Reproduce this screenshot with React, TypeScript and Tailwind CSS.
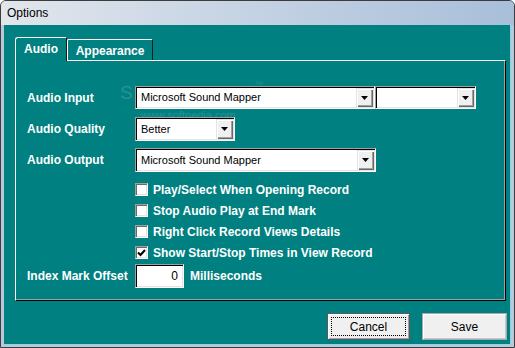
import React from "react";

const font = { fontFamily: '"Liberation Sans", Arial, sans-serif' };

function Arrow() {
  return (
    <svg width="7" height="4" viewBox="0 0 7 4">
      <polygon points="0,0 7,0 3.5,4" fill="#000" />
    </svg>
  );
}

function Combo({ value, width }: { value: string; width: string }) {
  return (
    <div
      className={`${width} h-full flex items-stretch bg-white border border-t-[#a0a0a0] border-l-[#a0a0a0] border-b-white border-r-white shadow-[inset_1px_1px_0_#000,inset_-1px_-1px_0_#e3e3e3] p-px`}
    >
      <span className="flex-1 flex items-center pl-[4px] text-[11px] text-black truncate">{value}</span>
      <div className="w-[17px] bg-[#f0f0f0] flex items-center justify-center shadow-[inset_1px_1px_0_#e3e3e3,inset_2px_2px_0_#fff,inset_-1px_-1px_0_#696969,inset_-2px_-2px_0_#a0a0a0]">
        <Arrow />
      </div>
    </div>
  );
}

function Check({ label, checked }: { label: string; checked?: boolean }) {
  return (
    <div className="h-[21px] flex items-center">
      <div className="w-[13px] h-[13px] bg-white border border-t-[#a0a0a0] border-l-[#a0a0a0] border-b-white border-r-white shadow-[inset_1px_1px_0_#696969,inset_-1px_-1px_0_#e3e3e3] flex items-center justify-center">
        {checked && (
          <svg width="9" height="8" viewBox="0 0 9 8">
            <path d="M1 3.5 L3.5 6 L8 1" stroke="#000" strokeWidth="2" fill="none" />
          </svg>
        )}
      </div>
      <span className="ml-[5px] text-[12px] font-bold text-white">{label}</span>
    </div>
  );
}

export default function App() {
  return (
    <div
      style={font}
      className="w-[515px] h-[348px] flex flex-col bg-[#b9c9dc] border border-[#3c3c3c] rounded-t-[6px] overflow-hidden"
    >
      <div className="h-[24px] flex items-center pl-[6px] text-[12px] text-black bg-gradient-to-r from-[#e2e6ec] via-[#c4d2e3] to-[#a8bfda]">
        Options
      </div>

      <div className="flex-1 mx-[3px] mb-[2px] bg-[#008080] border-r border-b border-[#86d6e4] flex flex-col pl-[11px]">
        {/* tabs */}
        <div className="mt-[12px] h-[23px] flex items-end">
          <div className="relative z-10 -mb-px h-[24px] w-[52px] bg-[#008080] border-l border-t border-white border-r border-r-[#1a1a1a] rounded-tl-[3px] flex items-center justify-center pb-[1px] text-[12px] font-bold text-white">
            Audio
          </div>
          <div className="h-[21px] w-[86px] border-l border-t border-white border-r border-r-[#1a1a1a] rounded-tl-[2px] flex items-center justify-center pt-[2px] text-[12px] font-bold text-white">
            Appearance
          </div>
        </div>

        {/* panel */}
        <div className="relative isolate w-[491px] h-[241px] border border-t-white border-l-white border-r-black border-b-black shadow-[inset_-1px_-1px_0_#a0a0a0] pl-[11px] pt-[25px] flex flex-col">
          <div className="absolute -z-10 left-[104px] top-[18px] text-[19px] tracking-[3px] text-[#2a9292] pointer-events-none select-none">
            SOFTPEDIA<span className="text-[8px] align-top">™</span>
          </div>
          <div className="absolute -z-10 left-[125px] top-[46px] text-[11px] text-[#2a9292] pointer-events-none select-none">
            www.softpedia.com
          </div>

          <div className="h-[23px] flex items-center">
            <span className="w-[108px] text-[12px] font-bold text-white">Audio Input</span>
            <Combo value="Microsoft Sound Mapper" width="w-[240px]" />
            <Combo value="" width="w-[101px]" />
          </div>

          <div className="mt-[8px] h-[24px] flex items-center">
            <span className="w-[108px] text-[12px] font-bold text-white">Audio Quality</span>
            <Combo value="Better" width="w-[100px]" />
          </div>

          <div className="mt-[7px] h-[24px] flex items-center">
            <span className="w-[108px] text-[12px] font-bold text-white">Audio Output</span>
            <Combo value="Microsoft Sound Mapper" width="w-[241px]" />
          </div>

          <div className="mt-[7px] pl-[108px] flex flex-col">
            <Check label="Play/Select When Opening Record" />
            <Check label="Stop Audio Play at End Mark" />
            <Check label="Right Click Record Views Details" />
            <Check label="Show Start/Stop Times in View Record" checked />
          </div>

          <div className="mt-px h-[24px] flex items-center">
            <span className="w-[108px] text-[12px] font-bold text-white">Index Mark Offset</span>
            <div className="w-[49px] h-full bg-white border border-t-[#a0a0a0] border-l-[#a0a0a0] border-b-white border-r-white shadow-[inset_1px_1px_0_#000,inset_-1px_-1px_0_#e3e3e3] flex items-center justify-end pr-[5px] text-[12px] text-black">
              0
            </div>
            <span className="ml-[6px] text-[12px] font-bold text-white">Milliseconds</span>
          </div>
        </div>

        {/* buttons */}
        <div className="mt-[12px] flex justify-end pr-[3px] gap-[12px]">
          <button className="w-[83px] h-[27px] bg-[#f0f0f0] border border-[#5a5a5a] shadow-[inset_1px_1px_0_#fff,inset_-1px_-1px_0_#a0a0a0] p-[3px] text-[12px] text-black">
            <span className="w-full h-full flex items-center justify-center border border-dotted border-black">
              Cancel
            </span>
          </button>
          <button className="w-[85px] h-[27px] bg-[#f0f0f0] border border-[#a8a8a8] shadow-[inset_1px_1px_0_#fff,inset_-1px_-1px_0_#c8c8c8] flex items-center justify-center text-[12px] text-black">
            Save
          </button>
        </div>
      </div>
    </div>
  );
}
